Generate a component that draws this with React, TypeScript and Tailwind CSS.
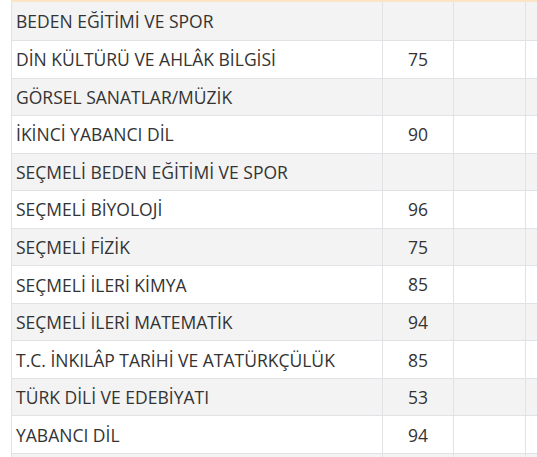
import React from "react";

type Row = { name: string; score?: number };

const rows: Row[] = [
  { name: "BEDEN EĞİTİMİ VE SPOR" },
  { name: "DİN KÜLTÜRÜ VE AHLÂK BİLGİSİ", score: 75 },
  { name: "GÖRSEL SANATLAR/MÜZİK" },
  { name: "İKİNCİ YABANCI DİL", score: 90 },
  { name: "SEÇMELİ BEDEN EĞİTİMİ VE SPOR" },
  { name: "SEÇMELİ BİYOLOJİ", score: 96 },
  { name: "SEÇMELİ FİZİK", score: 75 },
  { name: "SEÇMELİ İLERİ KİMYA", score: 85 },
  { name: "SEÇMELİ İLERİ MATEMATİK", score: 94 },
  { name: "T.C. İNKILÂP TARİHİ VE ATATÜRKÇÜLÜK", score: 85 },
  { name: "TÜRK DİLİ VE EDEBİYATI", score: 53 },
  { name: "YABANCI DİL", score: 94 },
  { name: "" },
];

export default function App() {
  return (
    <div className="w-[537px] h-[457px] overflow-hidden bg-white pl-[11px] font-['Open_Sans',sans-serif] text-[17.5px] text-[#333]">
      <table className="w-[560px] border-collapse table-fixed border-t-2 border-t-[#fce5c6]">
        <colgroup>
          <col className="w-[371px]" />
          <col className="w-[71px]" />
          <col className="w-[72px]" />
          <col />
        </colgroup>
        <tbody>
          {rows.map((r, i) => (
            <tr key={i} className={i % 2 === 0 ? "bg-[#f3f3f3]" : "bg-white"}>
              <td
                className={`${i === 0 ? "h-[39.5px]" : "h-[37.55px]"} border border-[#e0e2e5] pl-[4px] py-0 leading-[22px] whitespace-nowrap`}
              >
                {r.name}
              </td>
              <td className="border border-[#e0e2e5] text-center">{r.score ?? ""}</td>
              <td className="border border-[#e0e2e5]"></td>
              <td className="border border-[#e0e2e5]"></td>
            </tr>
          ))}
        </tbody>
      </table>
    </div>
  );
}
